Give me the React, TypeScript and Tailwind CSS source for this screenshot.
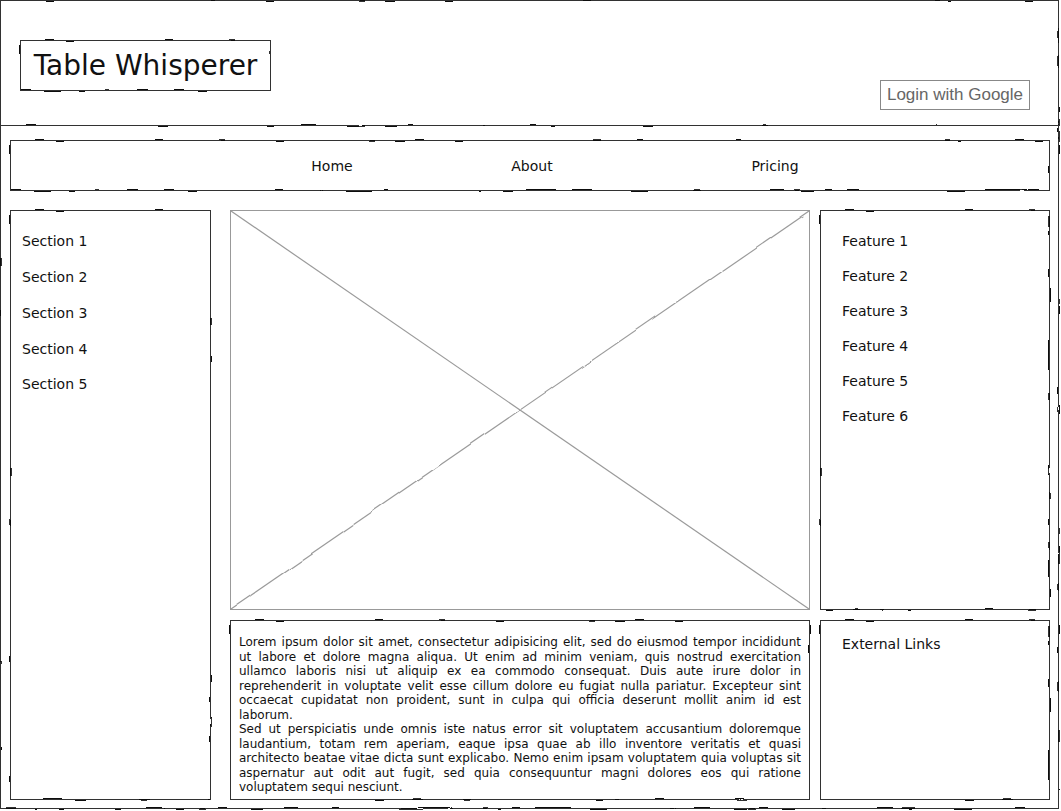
import React from 'react';

// shared svg filters for the hand-drawn look
function SketchFilters() {
  return (
    <svg width="0" height="0" className="absolute">
      <defs>
        <filter id="rough" filterUnits="userSpaceOnUse" x="-20" y="-20" width="1200" height="900">
          <feTurbulence type="fractalNoise" baseFrequency="0.05" numOctaves="1" seed="4" result="noise" />
          <feDisplacementMap in="SourceGraphic" in2="noise" scale="3" xChannelSelector="R" yChannelSelector="G" />
        </filter>
        <filter id="rough2" filterUnits="userSpaceOnUse" x="-20" y="-20" width="1200" height="900">
          <feTurbulence type="fractalNoise" baseFrequency="0.04" numOctaves="1" seed="17" result="noise" />
          <feDisplacementMap in="SourceGraphic" in2="noise" scale="2.5" xChannelSelector="R" yChannelSelector="G" />
        </filter>
        <filter id="soft" filterUnits="userSpaceOnUse" x="-20" y="-20" width="700" height="500">
          <feTurbulence type="fractalNoise" baseFrequency="0.03" numOctaves="1" seed="9" result="noise" />
          <feDisplacementMap in="SourceGraphic" in2="noise" scale="4" xChannelSelector="R" yChannelSelector="G" />
        </filter>
      </defs>
    </svg>
  );
}

// wobbly double stroke laid over a box
function Edge() {
  return (
    <>
      <span className="pointer-events-none absolute inset-0 border-[1.5px] border-[#111] [filter:url(#rough)]" />
      <span className="pointer-events-none absolute inset-0 border border-[#333] [filter:url(#rough2)]" />
    </>
  );
}

function Box({ className = '', children }: { className?: string; children?: React.ReactNode }) {
  return (
    <div className={`relative ${className}`}>
      <Edge />
      {children}
    </div>
  );
}

const sections = ['Section 1', 'Section 2', 'Section 3', 'Section 4', 'Section 5'];
const features = ['Feature 1', 'Feature 2', 'Feature 3', 'Feature 4', 'Feature 5', 'Feature 6'];

export default function App() {
  return (
    <div className="relative h-[811px] w-[1061px] overflow-hidden bg-white font-['DejaVu_Sans',sans-serif] text-[#111]">
      <SketchFilters />

      <div className="relative flex h-[809px] w-[1059px] flex-col">
        <Edge />

        {/* Header */}
        <header className="relative flex h-[126px] shrink-0 justify-between pl-[20px] pr-[29px] pt-[40px]">
          <span className="pointer-events-none absolute inset-x-0 bottom-0 h-[6px] border-b-[1.5px] border-[#111] [filter:url(#rough)]" />
          <span className="pointer-events-none absolute inset-x-0 bottom-0 h-[6px] border-b border-[#333] [filter:url(#rough2)]" />
          <Box className="flex h-[51px] w-[251px] items-center justify-center">
            <span className="text-[28px] leading-none">Table Whisperer</span>
          </Box>
          <button className="mt-[40px] flex h-[30px] w-[150px] items-center justify-center border border-[#888] font-['Liberation_Sans',sans-serif] text-[17px] text-[#666]">
            Login with Google
          </button>
        </header>

        {/* Nav */}
        <Box className="ml-[10px] mt-[14px] flex h-[51px] w-[1040px] items-center pl-[222px] pt-[2px] text-[14px]">
          <div className="w-[200px] text-center">Home</div>
          <div className="w-[200px] text-center">About</div>
          <div className="w-[286px] text-center">Pricing</div>
        </Box>

        {/* Main */}
        <div className="ml-[10px] mt-[19px] flex h-[590px]">
          <Box className="w-[201px] pl-[12px] pt-[14px] text-[14px]">
            {sections.map((s) => (
              <div key={s} className="flex h-[35.75px] items-center">
                {s}
              </div>
            ))}
          </Box>

          <div className="ml-[19px] grid grid-cols-[580px_230px] grid-rows-[400px_180px] gap-[10px]">
            {/* image placeholder */}
            <div className="relative border border-[#999]">
              <svg className="absolute inset-0 h-full w-full" viewBox="0 0 578 398" preserveAspectRatio="none">
                <line x1="0" y1="0" x2="578" y2="398" stroke="#9a9a9a" strokeWidth="1.2" />
                <g filter="url(#soft)">
                  <line x1="0" y1="398" x2="578" y2="0" stroke="#9a9a9a" strokeWidth="1.2" />
                </g>
              </svg>
            </div>

            <Box className="pl-[22px] pt-[14px] text-[14px]">
              {features.map((f) => (
                <div key={f} className="flex h-[35px] items-center">
                  {f}
                </div>
              ))}
            </Box>

            <Box className="px-[9px] pt-[15px]">
              <p className="text-justify text-[12px] leading-[14.5px]">
                Lorem ipsum dolor sit amet, consectetur adipisicing elit, sed do eiusmod tempor incididunt ut labore et
                dolore magna aliqua. Ut enim ad minim veniam, quis nostrud exercitation ullamco laboris nisi ut aliquip ex
                ea commodo consequat. Duis aute irure dolor in reprehenderit in voluptate velit esse cillum dolore eu fugiat
                nulla pariatur. Excepteur sint occaecat cupidatat non proident, sunt in culpa qui officia deserunt mollit
                anim id est laborum.
              </p>
              <p className="text-justify text-[12px] leading-[14.5px]">
                Sed ut perspiciatis unde omnis iste natus error sit voluptatem accusantium doloremque laudantium, totam rem
                aperiam, eaque ipsa quae ab illo inventore veritatis et quasi architecto beatae vitae dicta sunt explicabo.
                Nemo enim ipsam voluptatem quia voluptas sit aspernatur aut odit aut fugit, sed quia consequuntur magni
                dolores eos qui ratione voluptatem sequi nesciunt.
              </p>
            </Box>

            <Box className="pl-[22px] pt-[14px] text-[14px]">
              <div className="leading-[20px]">External Links</div>
            </Box>
          </div>
        </div>
      </div>
    </div>
  );
}
